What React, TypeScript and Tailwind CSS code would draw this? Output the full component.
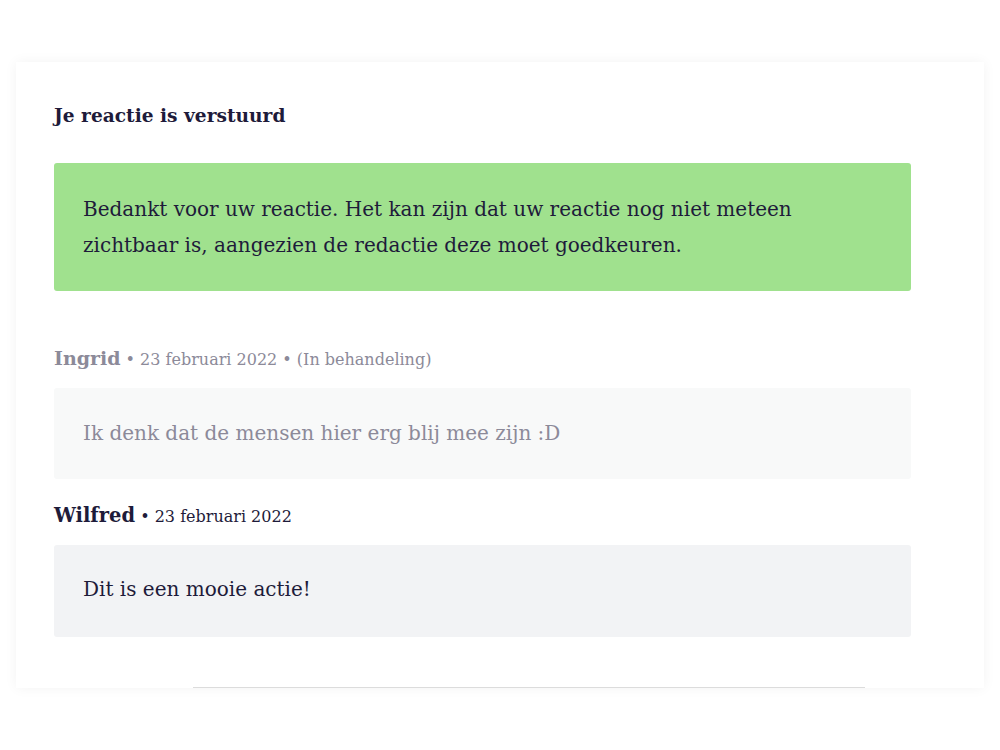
export default function App() {
  const font = { fontFamily: '"DejaVu Serif", "Liberation Serif", serif' };
  return (
    <div className="min-h-screen bg-white px-4 pt-[62px]" style={font}>
      <div className="relative h-[626px] w-[968px] bg-white px-[38px] pt-[40px] shadow-[0_0_12px_rgba(0,0,0,0.05)]">
        <h2 className="text-[18.6px] font-bold leading-7 text-[#1e1b3a]">Je reactie is verstuurd</h2>

        <div className="mt-[33px] w-[857px] rounded-[3px] bg-[#a0e18e] px-[29px] pt-[28px] pb-[28px] text-[20px] leading-9 text-[#1e1b3a]">
          Bedankt voor uw reactie. Het kan zijn dat uw reactie nog niet meteen
          <br />
          zichtbaar is, aangezien de redactie deze moet goedkeuren.
        </div>

        <div className="mt-[55px] w-[857px]">
          <p className="leading-6 text-[#8c8a99]">
            <span className="text-[19px] font-bold">Ingrid</span>
            <span className="text-[16px]"> • 23 februari 2022 • (In behandeling)</span>
          </p>
          <div className="mt-[16px] h-[91px] rounded-[3px] bg-[#f8f9f9] px-[29px] pt-[31px] text-[20px] leading-7 text-[#8c8a99]">
            Ik denk dat de mensen hier erg blij mee zijn :D
          </div>
        </div>

        <div className="mt-[25px] w-[857px]">
          <p className="leading-6 text-[#1e1b3a]">
            <span className="text-[19.5px] font-bold">Wilfred</span>
            <span className="text-[16px]"> • 23 februari 2022</span>
          </p>
          <div className="mt-[16px] h-[92px] rounded-[3px] bg-[#f2f3f5] px-[29px] pt-[30px] text-[20px] leading-7 text-[#1e1b3a]">
            Dit is een mooie actie!
          </div>
        </div>

        <div className="absolute bottom-0 left-[177px] w-[672px] border-b border-[#dcdcdc]" />
      </div>
    </div>
  );
}
